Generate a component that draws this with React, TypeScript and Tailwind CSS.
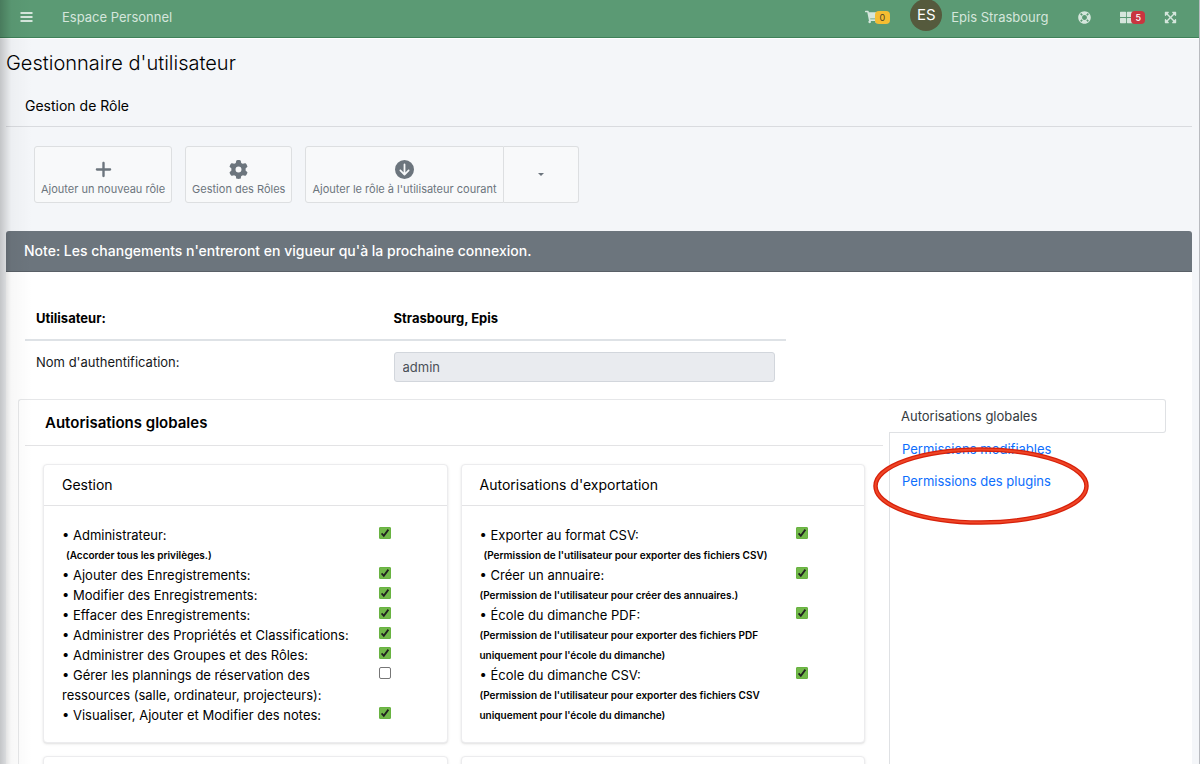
import { useId } from "react";
import type { ReactNode } from "react";
import { FaCircleArrowDown, FaGear, FaPlus } from "react-icons/fa6";
import { FaExpandArrowsAlt, FaLifeRing, FaShoppingCart, FaThLarge } from "react-icons/fa";

type Permission = { label: string; hint?: string; indentHint?: boolean; checked: boolean };

const management: Permission[] = [
  { label: "Administrateur:", hint: "(Accorder tous les privilèges.)", indentHint: true, checked: true },
  { label: "Ajouter des Enregistrements:", checked: true },
  { label: "Modifier des Enregistrements:", checked: true },
  { label: "Effacer des Enregistrements:", checked: true },
  { label: "Administrer des Propriétés et Classifications:", checked: true },
  { label: "Administrer des Groupes et des Rôles:", checked: true },
  {
    label: "Gérer les plannings de réservation des ressources (salle, ordinateur, projecteurs):",
    checked: false,
  },
  { label: "Visualiser, Ajouter et Modifier des notes:", checked: true },
];

const exportation: Permission[] = [
  {
    label: "Exporter au format CSV:",
    hint: "(Permission de l'utilisateur pour exporter des fichiers CSV)",
    indentHint: true,
    checked: true,
  },
  {
    label: "Créer un annuaire:",
    hint: "(Permission de l'utilisateur pour créer des annuaires.)",
    checked: true,
  },
  {
    label: "École du dimanche PDF:",
    hint: "(Permission de l'utilisateur pour exporter des fichiers PDF uniquement pour l'école du dimanche)",
    checked: true,
  },
  {
    label: "École du dimanche CSV:",
    hint: "(Permission de l'utilisateur pour exporter des fichiers CSV uniquement pour l'école du dimanche)",
    checked: true,
  },
];

function PermissionRow({ label, hint, indentHint, checked }: Permission) {
  const id = useId();
  return (
    <li className="flex">
      <label htmlFor={id} className="min-w-0 flex-1 pr-4 leading-5">
        <span className="block text-[13px]">{`• ${label}`}</span>
        {hint && (
          <span className={indentHint ? "block pl-1 text-[10px] font-semibold whitespace-nowrap" : "block text-[10px] font-semibold"}>
            {hint}
          </span>
        )}
      </label>
      <span className="w-[50px] shrink-0 pt-0.5">
        <span className="grid size-3">
          <input
            id={id}
            type="checkbox"
            defaultChecked={checked}
            className="peer col-start-1 row-start-1 size-3 appearance-none rounded-xs border border-[#767676] bg-white checked:rounded-[1px] checked:border-[#68b341] checked:bg-[#72b84a]"
          />
          <svg
            viewBox="0 0 12 12"
            className="pointer-events-none invisible col-start-1 row-start-1 size-3 peer-checked:visible"
            fill="none"
            stroke="#20201f"
            strokeWidth="1.8"
          >
            <path d="M2.6 6.4 4.8 8.8 9.4 2.6" />
          </svg>
        </span>
      </span>
    </li>
  );
}

function PermissionCard({ title, items }: { title: string; items: Permission[] }) {
  return (
    <section className="rounded border border-[#ececee] bg-white shadow-sm">
      <h3 className="border-b border-[#e3e3e5] px-[18px] py-2 text-[14px] leading-6">{title}</h3>
      <ul className="px-[18px] pt-[19px] pb-[17px]">
        {items.map((item) => (
          <PermissionRow key={item.label} {...item} />
        ))}
      </ul>
    </section>
  );
}

function ToolButton({ icon, children, className }: { icon: ReactNode; children: ReactNode; className: string }) {
  return (
    <button
      type="button"
      className={`flex h-[57px] flex-col items-center justify-end gap-0.5 border border-[#dddfe1] bg-[#f8f9fa] px-1.5 pb-[5px] text-[11px] text-[#6c757d] ${className}`}
    >
      <span className="text-[19px]">{icon}</span>
      <span className="leading-4">{children}</span>
    </button>
  );
}

export default function App() {
  return (
    <div className="relative flex h-screen flex-col overflow-hidden border-r border-[#b9bbc0] bg-[#f4f6f9] font-['Inter','Liberation_Sans',sans-serif] text-[13px] text-[#16191c]">
      <header className="flex h-[39px] shrink-0 items-start border-b border-white bg-[#5b9a74] pr-[22px] pl-5 text-[#d5e6dc] shadow-[inset_0_-1px_0_#3f8159]">
        <nav className="flex h-[34px] items-center">
          <button type="button" aria-label="Menu">
            <svg viewBox="0 0 13 10" className="h-2.5 w-[13px]" fill="currentColor">
              <path d="M.5 0h12v2H.5zM.5 4h12v2H.5zM.5 8h12v2H.5z" />
            </svg>
          </button>
          <a href="#espace" className="ml-[29px] pt-0.5">
            Espace Personnel
          </a>
        </nav>
        <div className="ml-auto flex h-[34px] items-center">
          <a href="#panier" aria-label="Panier" className="flex items-center">
            <FaShoppingCart className="text-[14px]" />
            <span className="-ml-1 rounded bg-[#f5bd32] px-[5px] text-[9px] leading-[13px] text-[#4d4426]">0</span>
          </a>
          <a href="#profil" className="ml-5 flex items-center gap-[9px]">
            <span className="-mt-1 flex size-8 items-center justify-center rounded-full bg-[#555a3d] text-[15px] text-white">
              ES
            </span>
            <span className="pt-0.5">Epis Strasbourg</span>
          </a>
          <button type="button" aria-label="Aide" className="ml-[30px] text-[13px]">
            <FaLifeRing />
          </button>
          <button type="button" aria-label="Applications" className="ml-[29px] flex items-center">
            <FaThLarge className="text-[13px]" />
            <span className="-ml-0.5 rounded bg-[#c9353f] px-1 text-[9px] leading-[13px] font-medium text-white">5</span>
          </button>
          <button type="button" aria-label="Plein écran" className="ml-[19px] text-[13px]">
            <FaExpandArrowsAlt />
          </button>
        </div>
      </header>

      <main className="pr-[7px] pl-1.5">
        <h1 className="pt-2.5 text-[20px] leading-7 font-light text-black">Gestionnaire d'utilisateur</h1>
        <h2 className="mt-[17px] border-b border-[#d9dbdf] px-[19px] pb-2 text-[14px] leading-6 text-black">
          Gestion de Rôle
        </h2>

        <div className="mt-[19px] flex gap-[13px] pl-7">
          <ToolButton icon={<FaPlus />} className="rounded-[3px]">
            Ajouter un nouveau rôle
          </ToolButton>
          <ToolButton icon={<FaGear />} className="rounded-[3px]">
            Gestion des Rôles
          </ToolButton>
          <div className="flex">
            <ToolButton icon={<FaCircleArrowDown />} className="rounded-l-[3px]">
              Ajouter le rôle à l'utilisateur courant
            </ToolButton>
            <button
              type="button"
              aria-label="Choisir un rôle"
              className="flex w-[75px] items-center justify-center rounded-r-[3px] border border-l-0 border-[#dddfe1] bg-[#f8f9fa] text-[#6c757d]"
            >
              <svg viewBox="0 0 6 3" className="h-[3px] w-1.5" fill="currentColor">
                <path d="M0 0h6L3 3z" />
              </svg>
            </button>
          </div>
        </div>

        <section className="mt-7 rounded-t-[3px] bg-white">
          <h2 className="rounded-t-[3px] border-b border-[#596067] bg-[#6c757d] px-[18px] py-2 text-[14px] leading-6 font-medium text-white">
            Note: Les changements n'entreront en vigueur qu'à la prochaine connexion.
          </h2>
          <div className="pt-7 pr-[26px] pl-3">
            <div className="pl-[7px]">
              <table className="w-2/3 table-fixed text-left">
                <thead>
                  <tr className="border-b-2 border-[#dee2e6]">
                    <th className="w-[47%] px-[11px] pt-2 pb-[11px] leading-5 font-bold text-black">Utilisateur:</th>
                    <th className="px-[11px] pt-2 pb-[11px] leading-5 font-bold text-black">Strasbourg, Epis</th>
                  </tr>
                </thead>
                <tbody>
                  <tr>
                    <td className="px-[11px] py-[11px] align-top leading-5">
                      <label htmlFor="login">Nom d'authentification:</label>
                    </td>
                    <td className="px-[11px] py-[11px] align-top">
                      <input
                        id="login"
                        type="text"
                        disabled
                        defaultValue="admin"
                        className="block h-[30px] w-full rounded-[3px] border border-[#d2d6dc] bg-[#e9ebef] px-2 text-[13px] text-[#495057]"
                      />
                    </td>
                  </tr>
                </tbody>
              </table>
            </div>

            <div className="mt-1.5 flex">
              <div className="flex-1 rounded-tl-[3px] border-t border-l border-[#e6e7e9] px-1.5">
                <h2 className="border-b border-[#e3e3e5] px-5 pt-[11px] pb-2.5 text-[15px] leading-6 font-semibold text-black">
                  Autorisations globales
                </h2>
                <div className="grid grid-cols-2 gap-[13px] px-[18px] pt-[18px] text-black">
                  <PermissionCard title="Gestion" items={management} />
                  <PermissionCard title="Autorisations d'exportation" items={exportation} />
                  <div className="h-10 rounded border border-[#ececee] bg-white shadow-sm" />
                  <div className="h-10 rounded border border-[#ececee] bg-white shadow-sm" />
                </div>
              </div>
              <nav className="relative flex w-[277px] shrink-0 flex-col leading-5 text-[#0d6efd]">
                <a
                  href="#globales"
                  className="rounded-r-[3px] border border-l-0 border-[#dfe1e4] px-3 py-1.5 text-[#343a40]"
                >
                  Autorisations globales
                </a>
                <div className="flex flex-1 flex-col gap-3 border-l border-[#dfe1e4] px-3 pt-1.5">
                  <a href="#modifiables">Permissions modifiables</a>
                  <a href="#plugins">Permissions des plugins</a>
                </div>
                <svg
                  viewBox="0 0 216 78"
                  className="pointer-events-none absolute top-12 -left-4 h-[78px] w-[216px]"
                  fill="none"
                >
                  <ellipse cx="108" cy="39" rx="105.5" ry="36.5" stroke="#d7200a" strokeWidth="4.5" />
                  <ellipse cx="108" cy="39" rx="105.5" ry="36.5" stroke="#ee4526" strokeWidth="2" />
                </svg>
              </nav>
            </div>
          </div>
        </section>
      </main>

      <div className="pointer-events-none absolute inset-y-0 left-0 w-8 bg-linear-to-r from-black/20 via-black/3 via-35% to-transparent" />
    </div>
  );
}
